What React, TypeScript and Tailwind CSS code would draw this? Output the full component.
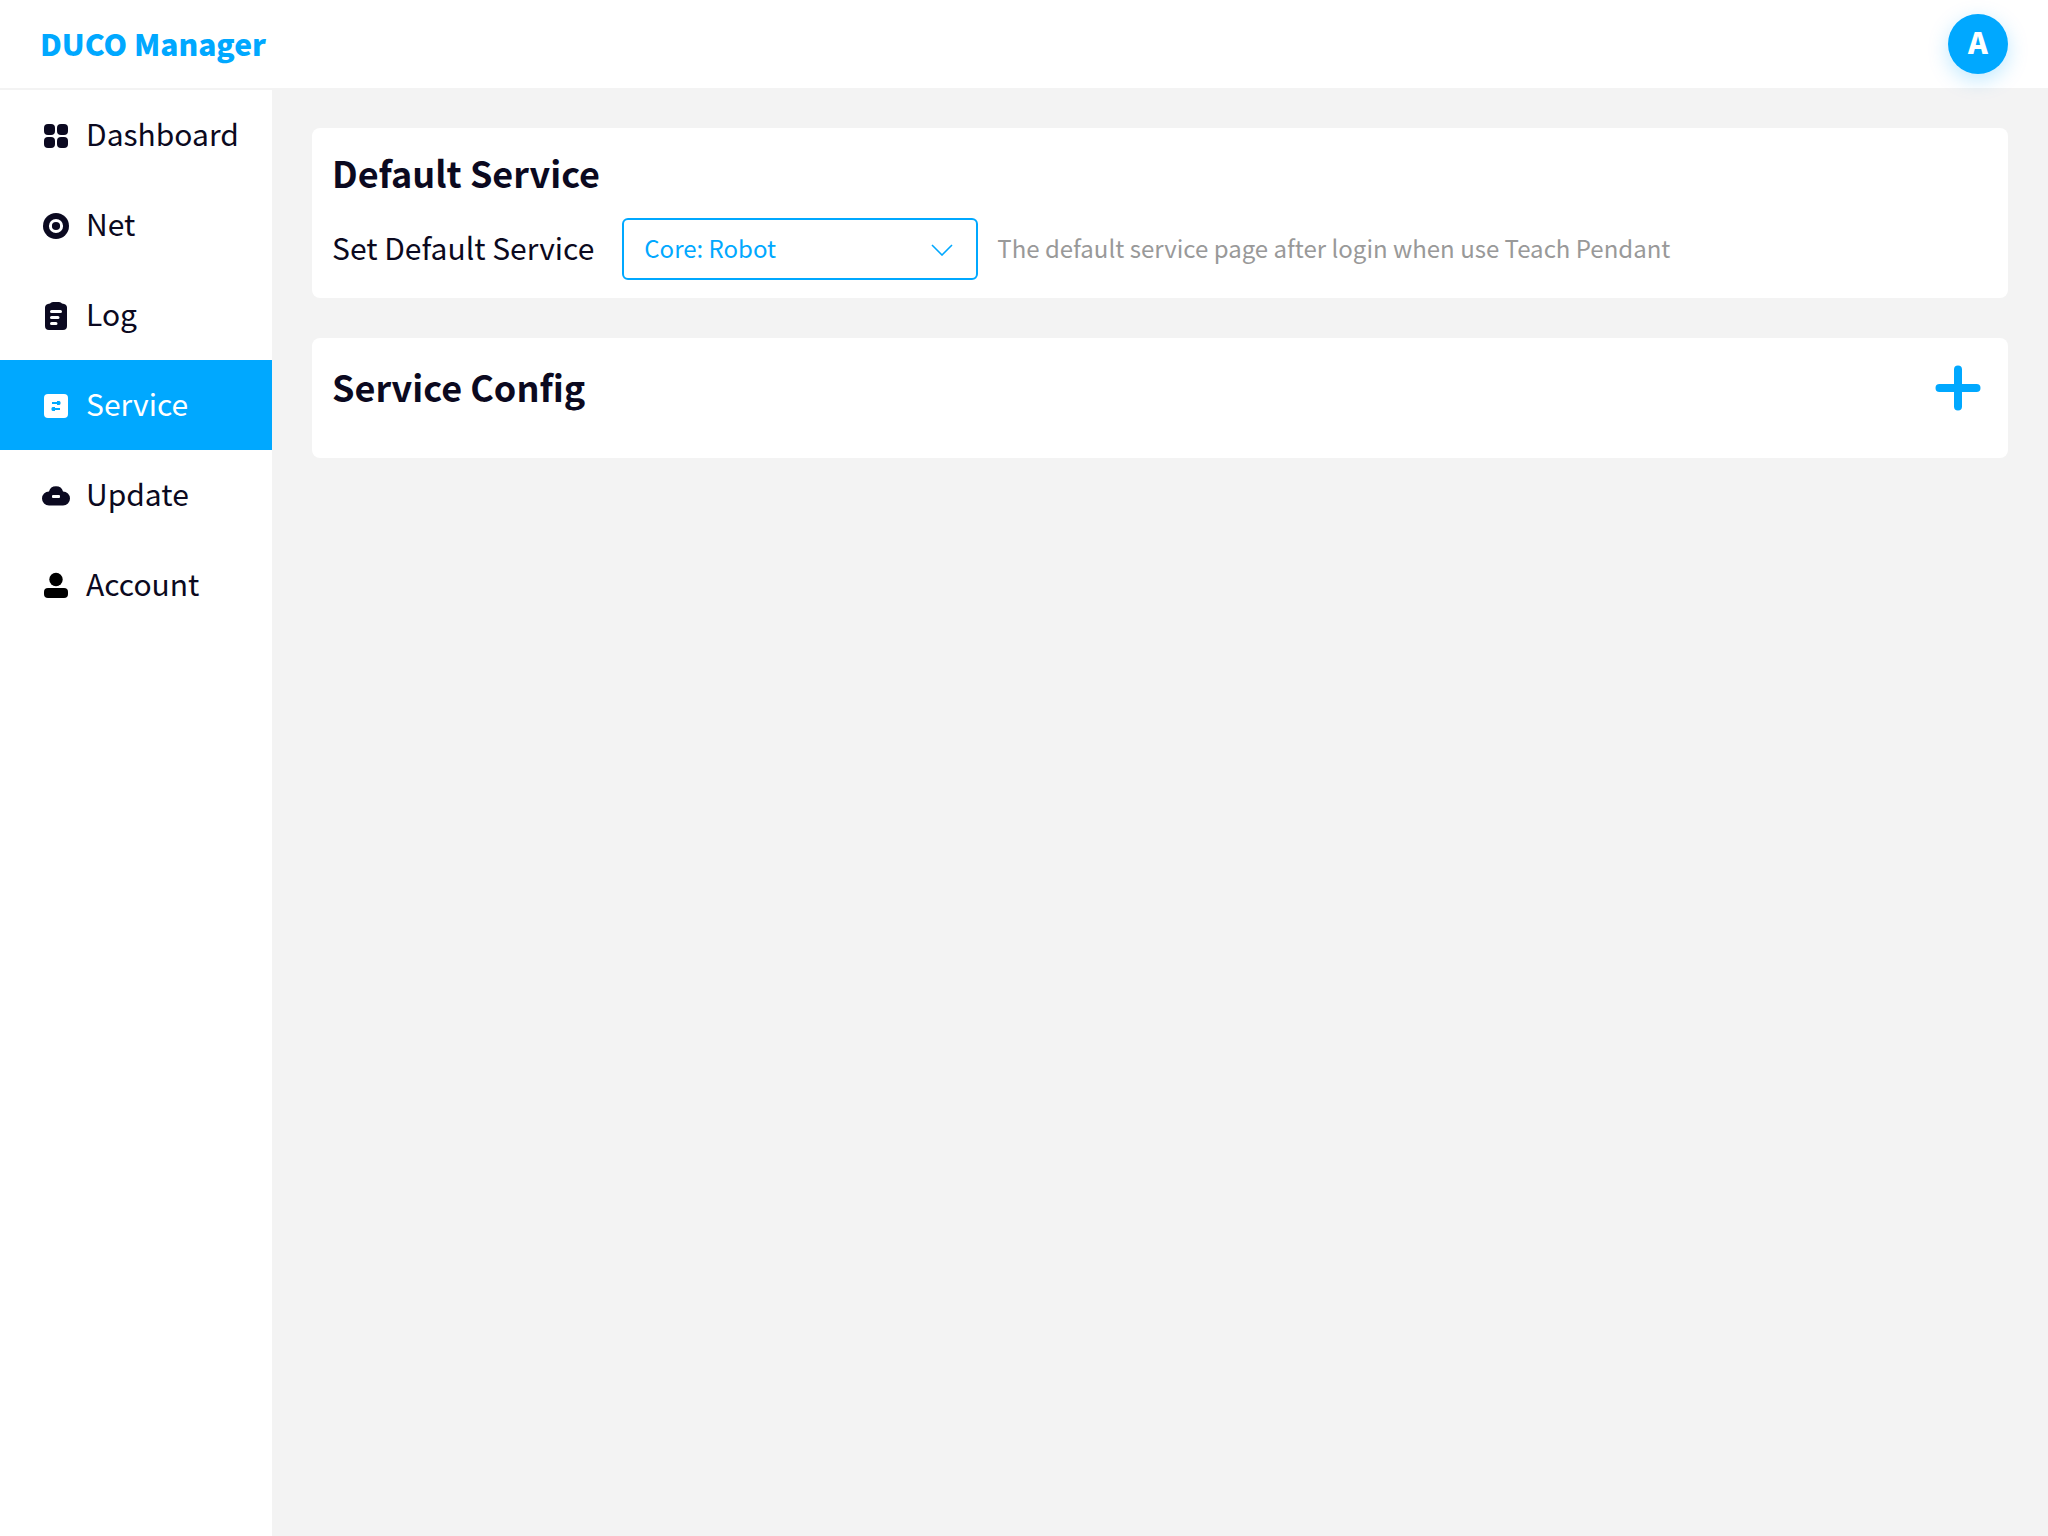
import React, { useState } from 'react';

type IconProps = { className?: string };

function DashboardIcon({ className }: IconProps) {
  return (
    <svg viewBox="0 0 28 28" className={className} fill="currentColor">
      <rect x="2" y="2" width="11" height="11" rx="4" />
      <rect x="15" y="2" width="11" height="11" rx="4" />
      <rect x="2" y="15" width="11" height="11" rx="4" />
      <rect x="15" y="15" width="11" height="11" rx="4" />
    </svg>
  );
}

function NetIcon({ className }: IconProps) {
  return (
    <svg viewBox="0 0 28 28" className={className} fill="currentColor">
      <circle cx="14" cy="14" r="13" />
      <circle cx="14" cy="14" r="5.6" fill="none" stroke="#fff" strokeWidth="3" />
    </svg>
  );
}

function LogIcon({ className }: IconProps) {
  return (
    <svg viewBox="0 0 28 28" className={className} fill="currentColor">
      <path d="M8 1.5Q9 0 11 0h6q2 0 3 1.500 5 .5 5 4V24q0 4-4 4H7q-4 0-4-4V5.500q0-3.500 5-4z" />
      <path
        d="M9.500 9.500h9M9.500 15.500h6.500M9.500 21.500h4.500"
        fill="none"
        stroke="#fff"
        strokeWidth="3"
        strokeLinecap="round"
      />
    </svg>
  );
}

function ServiceIcon({ className }: IconProps) {
  return (
    <svg viewBox="0 0 28 28" className={className} fill="currentColor">
      <rect x="2" y="2" width="24" height="24" rx="4" />
      <g fill="#00a8ff">
        <path d="M10 10h5V9h2.500L18.500 10v2l-1 1H15v-1h-5z" />
        <path d="M18 16h-5v-1h-2.500L9.500 16v2l1 1H13v-1h5z" />
      </g>
    </svg>
  );
}

function UpdateIcon({ className }: IconProps) {
  return (
    <svg viewBox="0 0 28 28" className={className} fill="currentColor">
      <path d="M7 9.500a7.200 6.800 0 0 1 14 0 7 7 0 0 1 0 14H7a7 7 0 0 1 0-14z" />
      <rect x="10" y="13" width="8" height="3" rx="1" fill="#fff" />
    </svg>
  );
}

function AccountIcon({ className }: IconProps) {
  return (
    <svg viewBox="0 0 28 28" className={className} fill="#000">
      <circle cx="14" cy="7.500" r="6.700" />
      <rect x="2" y="16" width="24" height="10" rx="4" />
    </svg>
  );
}

const menu = [
  { name: 'Dashboard', icon: DashboardIcon },
  { name: 'Net', icon: NetIcon },
  { name: 'Log', icon: LogIcon },
  { name: 'Service', icon: ServiceIcon },
  { name: 'Update', icon: UpdateIcon },
  { name: 'Account', icon: AccountIcon },
];

function Header() {
  return (
    <header className="flex h-[88px] items-center justify-between bg-white px-10">
      <h1 className="pb-[2px] text-[30px] leading-10 font-black text-[#00a8ff]">DUCO Manager</h1>
      <button
        type="button"
        aria-label="Account menu"
        className="relative h-[60px] w-[60px] rounded-full bg-[#00a8ff] pb-[6px] text-[30px] leading-10 font-black text-white shadow-[0_6px_20px_rgba(0,168,255,0.25)]"
      >
        A
      </button>
    </header>
  );
}

function Sidebar() {
  return (
    <nav className="w-[272px] shrink-0 bg-white">
      {menu.map(({ name, icon: Icon }) => (
        <a
          key={name}
          href={`#${name.toLowerCase()}`}
          className={`flex h-[90px] items-center gap-4 pl-[42px] text-[30px] leading-10 ${
            name === 'Service' ? 'bg-[#00a8ff] text-white' : 'text-[#0b0920]'
          }`}
        >
          <Icon className="mt-[2px] h-7 w-7 shrink-0" />
          <span className="pb-1">{name}</span>
        </a>
      ))}
    </nav>
  );
}

function DefaultService() {
  const [service, setService] = useState('robot');

  return (
    <section className="rounded-lg bg-white px-5 py-[18px]">
      <h2 className="text-[36px] leading-[52px] font-bold">Default Service</h2>
      <div className="mt-5 flex items-center">
        <label htmlFor="default-service" className="pb-1 text-[30px] leading-10">
          Set Default Service
        </label>
        <div className="relative ml-7 text-[#00a8ff]">
          <select
            id="default-service"
            value={service}
            onChange={(e) => setService(e.target.value)}
            className="block h-[62px] w-[356px] appearance-none rounded-md border-2 border-[#00a8ff] bg-white px-5 pb-[2px] text-[24px]"
          >
            <option value="robot">Core: Robot</option>
          </select>
          <svg
            viewBox="0 0 22 12"
            className="pointer-events-none absolute top-[26px] right-[25px] h-3 w-[22px]"
            fill="none"
            stroke="currentColor"
            strokeWidth="1.600"
          >
            <path d="M1 1l10 10L21 1" />
          </svg>
        </div>
        <p className="ml-[19px] pb-[2px] text-[24px] leading-10 text-[#999]">
          The default service page after login when use Teach Pendant
        </p>
      </div>
    </section>
  );
}

function ServiceConfig() {
  return (
    <section className="flex h-[120px] items-start justify-between rounded-lg bg-white px-5 pt-[22px]">
      <h2 className="text-[36px] leading-[52px] font-bold">Service Config</h2>
      <button type="button" aria-label="Add service" className="pt-1 text-[#00a8ff]">
        <svg viewBox="0 0 56 48" className="h-12 w-14" stroke="currentColor" strokeWidth="8" strokeLinecap="round">
          <path d="M26 5.500v37M7.500 24h37" />
        </svg>
      </button>
    </section>
  );
}

export default function App() {
  return (
    <div className="flex min-h-screen flex-col bg-[#f3f3f3] font-['Noto_Sans_CJK_SC',sans-serif] text-[#0b0920]">
      <Header />
      <div className="mt-[2px] flex flex-1">
        <Sidebar />
        <main className="flex min-w-0 flex-1 flex-col gap-10 px-10 pt-[38px]">
          <DefaultService />
          <ServiceConfig />
        </main>
      </div>
    </div>
  );
}
